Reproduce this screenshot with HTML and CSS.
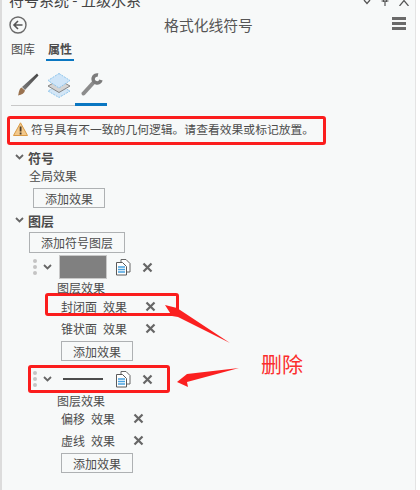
FILE: index.html
```html
<!DOCTYPE html>
<html lang="zh-CN">

<head>
    <meta charset="UTF-8">
    <title>格式化线符号</title>
    <link rel="stylesheet" href="styles.css">
</head>

<body>
    <div class="panel">
        <div class="window-bar">
            <span class="window-title">符号系统 - 五级水系</span>
            <div class="window-controls">
                <svg width="8" height="6" viewBox="0 0 8 6"><path d="M1 0l3 3.500 3-3.500" fill="none" stroke="#555" stroke-width="1.300"/></svg>
                <svg width="8" height="6" viewBox="0 0 8 6"><path d="M0.500 1h7M4 1v5M2.500 0v2M5.500 0v2" fill="none" stroke="#555" stroke-width="1.200"/></svg>
                <svg width="10" height="6" viewBox="0 0 10 6"><path d="M0.500 6l4.500-5.500 4.500 5.500" fill="none" stroke="#555" stroke-width="1.200"/></svg>
            </div>
        </div>

        <div class="header">
            <svg class="back" width="18" height="18" viewBox="0 0 18 18">
                <circle cx="9" cy="9" r="8" fill="none" stroke="#6a6a6a" stroke-width="1.400"/>
                <path d="M13.500 9h-8M9 5l-4 4 4 4" fill="none" stroke="#555" stroke-width="1.600"/>
            </svg>
            <span class="header-title">格式化线符号</span>
            <div class="menu"><i></i><i></i><i></i></div>
        </div>

        <div class="tabs">
            <span class="tab">图库</span>
            <span class="tab active">属性</span>
        </div>

        <div class="icon-tabs">
            <div class="icon-tab">
                <svg width="22" height="24" viewBox="0 0 22 24">
                    <defs>
                        <linearGradient id="handle" x1="0" y1="1" x2="1" y2="0">
                            <stop offset="0" stop-color="#7d7d7d"/>
                            <stop offset="1" stop-color="#444"/>
                        </linearGradient>
                    </defs>
                    <path d="M5 14L20 .5l1.500 2L8 17z" fill="url(#handle)"/>
                    <path d="M4.500 14.500L8 17.500c-.5 2.500-3 4.500-7 5 1-2 .5-6 3.500-8z" fill="#9a7350"/>
                </svg>
            </div>
            <div class="icon-tab">
                <svg width="24" height="26" viewBox="0 0 24 26">
                    <path d="M12 12L23 18 12 24.500 1 18z" fill="#d3e6f6" stroke="#8cc4ec" stroke-dasharray="2 1"/>
                    <path d="M12 7L23 13 12 19.500 1 13z" fill="#d4d4d4" stroke="#858585"/>
                    <path d="M12 .5L23 7.500 12 15 1 7.500z" fill="#cfe5f8" stroke="#8cc4ec" stroke-dasharray="2 1"/>
                </svg>
            </div>
            <div class="icon-tab active">
                <svg width="24" height="24" viewBox="0 0 24 24">
                    <path d="M3.500 20.500L14 9" fill="none" stroke="#8c8c8c" stroke-width="4" stroke-linecap="round"/>
                    <path d="M18 2A4 4 0 1 0 21 7" fill="none" stroke="#7c7c7c" stroke-width="3.500"/>
                </svg>
            </div>
        </div>

        <div class="warning">
            <svg width="15" height="14" viewBox="0 0 15 14">
                <path d="M7.500.8L14.500 13.500H.5z" fill="#f3c98b" stroke="#d99a45"/>
                <path d="M6.700 4.500h1.800v5H6.700zM6.700 10.500h1.800v2H6.700z" fill="#4a3a28"/>
            </svg>
            <span>符号具有不一致的几何逻辑。请查看效果或标记放置。</span>
        </div>

        <div class="section">
            <svg class="chev" width="9" height="6" viewBox="0 0 9 6"><path d="M1 1l3.500 3.500L8 1" fill="none" stroke="#666" stroke-width="1.800"/></svg>
            <span>符号</span>
        </div>
        <div class="label global-label">全局效果</div>
        <button class="btn global-btn">添加效果</button>

        <div class="section layers">
            <svg class="chev" width="9" height="6" viewBox="0 0 9 6"><path d="M1 1l3.500 3.500L8 1" fill="none" stroke="#666" stroke-width="1.800"/></svg>
            <span>图层</span>
        </div>
        <button class="btn add-layer">添加符号图层</button>

        <div class="layer-row">
            <div class="grip"><i></i><i></i><i></i></div>
            <svg class="chev" width="9" height="6" viewBox="0 0 9 6"><path d="M1 1l3.500 3.500L8 1" fill="none" stroke="#666" stroke-width="1.800"/></svg>
            <div class="swatch"></div>
            <svg class="copy" width="15" height="17" viewBox="0 0 15 17">
                <path d="M5 3V.5h5l4 4v8.500H10.500" fill="#fff" stroke="#666"/>
                <path d="M.5 3.500H6.500L10.500 7.500v8.500H.5z" fill="#fff" stroke="#5a5a5a"/>
                <path d="M2 8h7M2 10.500h7M2 13h7" stroke="#4aa3e0" stroke-width="1.400"/>
            </svg>
            <svg class="close" width="11" height="11" viewBox="0 0 11 11"><path d="M1.500 1.500l8 8M9.500 1.500l-8 8" stroke="#666" stroke-width="2.200"/></svg>
        </div>

        <div class="label effects-label">图层效果</div>
        <div class="effect marked">
            <span class="effect-name">封闭面</span><span class="effect-kind">效果</span>
            <svg class="close" width="11" height="11" viewBox="0 0 11 11"><path d="M1.500 1.500l8 8M9.500 1.500l-8 8" stroke="#666" stroke-width="2.200"/></svg>
        </div>
        <div class="effect second">
            <span class="effect-name">锥状面</span><span class="effect-kind">效果</span>
            <svg class="close" width="11" height="11" viewBox="0 0 11 11"><path d="M1.500 1.500l8 8M9.500 1.500l-8 8" stroke="#666" stroke-width="2.200"/></svg>
        </div>
        <button class="btn effect-btn">添加效果</button>

        <div class="layer-row line-row">
            <div class="grip"><i></i><i></i><i></i></div>
            <svg class="chev" width="9" height="6" viewBox="0 0 9 6"><path d="M1 1l3.500 3.500L8 1" fill="none" stroke="#666" stroke-width="1.800"/></svg>
            <div class="line-sample"></div>
            <svg class="copy" width="15" height="17" viewBox="0 0 15 17">
                <path d="M5 3V.5h5l4 4v8.500H10.500" fill="#fff" stroke="#666"/>
                <path d="M.5 3.500H6.500L10.500 7.500v8.500H.5z" fill="#fff" stroke="#5a5a5a"/>
                <path d="M2 8h7M2 10.500h7M2 13h7" stroke="#4aa3e0" stroke-width="1.400"/>
            </svg>
            <svg class="close" width="11" height="11" viewBox="0 0 11 11"><path d="M1.500 1.500l8 8M9.500 1.500l-8 8" stroke="#666" stroke-width="2.200"/></svg>
        </div>

        <div class="label line-effects-label">图层效果</div>
        <div class="effect short first">
            <span class="effect-name">偏移</span><span class="effect-kind">效果</span>
            <svg class="close" width="11" height="11" viewBox="0 0 11 11"><path d="M1.500 1.500l8 8M9.500 1.500l-8 8" stroke="#666" stroke-width="2.200"/></svg>
        </div>
        <div class="effect short">
            <span class="effect-name">虚线</span><span class="effect-kind">效果</span>
            <svg class="close" width="11" height="11" viewBox="0 0 11 11"><path d="M1.500 1.500l8 8M9.500 1.500l-8 8" stroke="#666" stroke-width="2.200"/></svg>
        </div>
        <button class="btn effect-btn">添加效果</button>

        <!-- red annotations on top of the screenshot -->
        <svg class="arrows" width="420" height="490" viewBox="0 0 420 490">
            <path d="M165 305L177 308 230 343 178 317 172 316z" fill="#fb2020"/>
            <path d="M177 382L187 374 239 368 187 382 188 387z" fill="#fb2020"/>
        </svg>
        <span class="note">删除</span>
    </div>
</body>

</html>
```

FILE: styles.css
```css
* {
    box-sizing: border-box;
}

body {
    margin: 0;
    background-color: #fff;
    font-family: "Noto Sans CJK SC", "Liberation Sans", sans-serif;
    font-size: 12px;
    color: #4c4c4c;
    overflow: hidden;
}

.panel {
    position: relative;
    width: 416px;
    height: 490px;
    background-color: #f7f9f9;
    border-left: 2px solid #dcdcdc;
    border-right: 1px solid #e4e4e4;
    overflow: hidden;
}

.window-bar {
    display: flex;
    justify-content: space-between;
    height: 11px;
    padding-left: 7px;
    padding-right: 6px;
    overflow: hidden;
}

.window-title {
    font-size: 15px;
    line-height: 20px;
    margin-top: -10px;
    color: #444;
}

.window-controls {
    display: flex;
    gap: 10px;
    height: 6px;
    align-items: flex-start;
}

.header {
    position: relative;
    display: flex;
    justify-content: center;
    align-items: center;
    height: 26px;
}

.back {
    position: absolute;
    left: 7px;
    top: 5px;
}

.header-title {
    font-size: 14.800px;
    color: #555;
}

.menu {
    position: absolute;
    right: 9px;
    top: 6px;
    display: flex;
    flex-direction: column;
    gap: 2px;
}

.menu i {
    display: block;
    width: 14px;
    height: 3px;
    background-color: #6a6a6a;
}

.tabs {
    display: flex;
    gap: 12px;
    padding-left: 9px;
    height: 24px;
}

.tab {
    height: 24px;
    line-height: 24px;
}

.tab.active {
    font-weight: bold;
    border-bottom: 2px solid #0a77c2;
    padding: 0 2px;
    margin-left: -1px;
}

.icon-tabs {
    display: flex;
    margin-left: 9px;
    margin-top: 10px;
    height: 35px;
    width: 96px;
    border-bottom: 1px solid #c8c8c8;
}

.icon-tab {
    width: 32px;
    height: 35px;
    padding-left: 4px;
    padding-top: 2px;
}

.icon-tab:first-child {
    padding-left: 6px;
}

.icon-tab.active {
    border-bottom: 3px solid #0a77c2;
    padding-left: 5px;
}

.warning {
    display: flex;
    align-items: center;
    gap: 3px;
    width: 319px;
    height: 29px;
    margin-top: 10px;
    margin-left: 5px;
    padding-left: 3px;
    padding-bottom: 4px;
    border: 3px solid #fb1d1d;
    border-radius: 3px;
    font-size: 11.800px;
    white-space: nowrap;
}

.section {
    display: flex;
    align-items: center;
    gap: 4px;
    height: 18px;
    margin-top: 3px;
    padding-left: 13px;
    font-size: 13px;
    font-weight: bold;
}

.label {
    height: 18px;
    line-height: 18px;
}

.global-label {
    margin-top: 1px;
    margin-left: 27px;
}

.btn {
    display: block;
    height: 20px;
    padding: 0;
    font-family: inherit;
    font-size: 12px;
    line-height: 17px;
    color: #4c4c4c;
    background-color: transparent;
    border: 1px solid #aeb1b3;
}

.global-btn {
    width: 72px;
    margin-top: 3px;
    margin-left: 31px;
}

.section.layers {
    margin-top: 3px;
}

.add-layer {
    width: 96px;
    height: 21px;
    margin-top: 3px;
    margin-left: 27px;
}

.layer-row {
    display: flex;
    align-items: center;
    height: 24px;
    margin-top: 2px;
    padding-left: 31px;
}

.grip {
    display: flex;
    flex-direction: column;
    gap: 2px;
    width: 10px;
}

.grip i {
    display: block;
    width: 4px;
    height: 4px;
    border-radius: 50%;
    background-color: #c4c4c4;
}

.swatch {
    width: 48px;
    height: 24px;
    margin-left: 7px;
    background-color: #808080;
    border: 1px solid #c8c8c8;
}

.copy {
    margin-left: 9px;
}

.layer-row .close {
    margin-left: 11px;
}

.effects-label {
    margin-left: 55px;
}

.effect {
    display: flex;
    align-items: center;
    height: 22px;
    padding-left: 59px;
}

.effect-name {
    width: 42px;
}

.effect .close {
    margin-left: 18px;
}

.effect.marked {
    width: 134px;
    height: 23px;
    margin-top: -4px;
    margin-left: 43px;
    padding-left: 13px;
    padding-top: 4px;
    border: 3px solid #fb1d1d;
    border-radius: 3px;
}

.effect.second {
    margin-top: 1px;
}

.effect.short .effect-name {
    width: 30px;
}

.effect.short.first {
    margin-top: -3px;
}

.effect-btn {
    width: 72px;
    margin-top: 2px;
    margin-left: 59px;
}

.line-row {
    width: 142px;
    height: 28px;
    margin-top: 4px;
    margin-left: 26px;
    padding-left: 2px;
    border: 3px solid #fb1d1d;
    border-radius: 3px;
}

.line-sample {
    width: 40px;
    height: 2px;
    margin-left: 11px;
    margin-right: 4px;
    background-color: #4c4c4c;
}

.line-effects-label {
    margin-top: -1px;
    margin-left: 55px;
}

.arrows {
    position: absolute;
    left: -2px;
    top: 0;
    pointer-events: none;
}

.note {
    position: absolute;
    left: 259px;
    top: 348px;
    font-size: 21px;
    line-height: 30px;
    color: #fb2d2d;
}
```
